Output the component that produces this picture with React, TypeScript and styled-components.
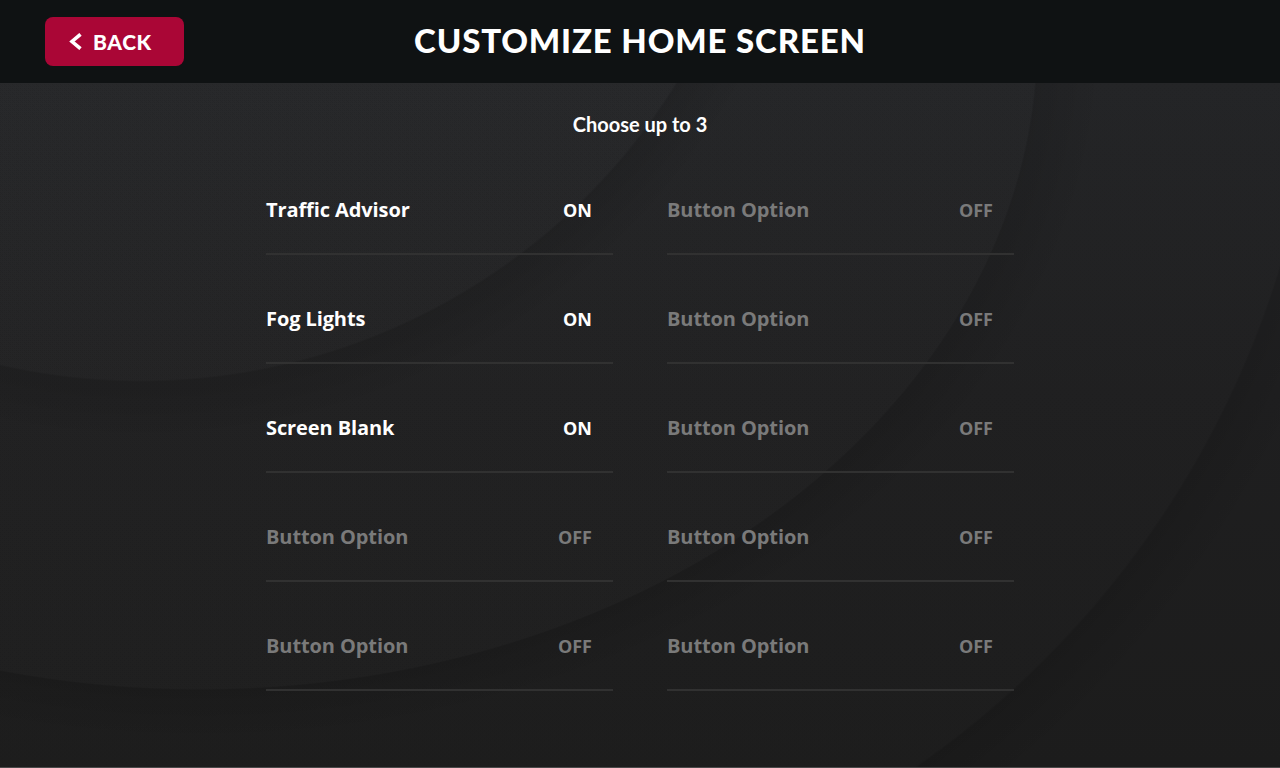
import React from "react";
import styled, { createGlobalStyle } from "styled-components";

const GlobalStyle = createGlobalStyle`
  html, body {
    margin: 0;
    padding: 0;
    background: #1c1c1c;
  }
  * { box-sizing: border-box; }
`;

const Screen = styled.div`
  width: 1280px;
  height: 768px;
  display: flex;
  flex-direction: column;
  overflow: hidden;
  font-family: Lato, "Open Sans", sans-serif;
`;

const Header = styled.header`
  height: 83px;
  flex: none;
  background: #0f1213;
  display: grid;
  grid-template-columns: 1fr auto 1fr;
  align-items: center;
`;

const BackButton = styled.button`
  justify-self: start;
  margin-left: 45px;
  margin-bottom: 1px;
  width: 139px;
  height: 49px;
  border: none;
  border-radius: 8px;
  background: #aa0636;
  color: #fff;
  display: flex;
  align-items: center;
  gap: 11px;
  padding: 0 0 0 24px;
  font-family: Lato, sans-serif;
  font-weight: 900;
  font-size: 21px;
  letter-spacing: 0.6px;
  cursor: pointer;
`;

const Title = styled.h1`
  margin: 0 0 3px;
  color: #fff;
  font-family: Lato, sans-serif;
  font-weight: 900;
  font-size: 33px;
  letter-spacing: 0.85px;
  line-height: 1;
`;

const Main = styled.main`
  flex: 1;
  display: flex;
  flex-direction: column;
  align-items: center;
  padding-top: 29px;
  border-bottom: 1px solid #4a4a4a;
  background:
    radial-gradient(circle at 141px -332px, rgba(255,255,255,0.006) 0, rgba(255,255,255,0.006) 629px, rgba(0,0,0,0.1) 631px, rgba(0,0,0,0) 690px),
    radial-gradient(838px 650px at 200px -43px, rgba(255,255,255,0.006) 0, rgba(255,255,255,0.006) 99.8%, rgba(0,0,0,0.1) 100%, rgba(0,0,0,0) 108%),
    radial-gradient(circle at 377px -91px, rgba(255,255,255,0.005) 0, rgba(255,255,255,0.005) 943px, rgba(0,0,0,0.1) 945px, rgba(0,0,0,0) 1010px),
    linear-gradient(180deg, #232426 0%, #1f1f20 45%, #1c1c1c 100%);
`;

const Hint = styled.div`
  color: #fff;
  font-family: Lato, sans-serif;
  font-weight: 700;
  font-size: 20px;
  line-height: 24px;
  height: 24px;
`;

const OptionGrid = styled.div`
  margin-top: 10px;
  display: grid;
  grid-template-columns: 347px 347px;
  column-gap: 54px;
`;

const Row = styled.div<{ $on: boolean }>`
  height: 109px;
  padding: 20px 21px 0 0;
  border-bottom: 2px solid #313131;
  display: flex;
  align-items: center;
  justify-content: space-between;
  font-family: "Open Sans", sans-serif;
  font-weight: 700;
  color: ${(p) => (p.$on ? "#ffffff" : "#7a7a7a")};
`;

const Label = styled.span`
  font-size: 20px;
  letter-spacing: -0.1px;
`;

const State = styled.span`
  font-size: 18px;
`;

type Option = { label: string; on: boolean };

const left: Option[] = [
  { label: "Traffic Advisor", on: true },
  { label: "Fog Lights", on: true },
  { label: "Screen Blank", on: true },
  { label: "Button Option", on: false },
  { label: "Button Option", on: false },
];
const right: Option[] = Array.from({ length: 5 }, () => ({ label: "Button Option", on: false }));

const cells: Option[] = [];
for (let i = 0; i < 5; i++) {
  cells.push(left[i], right[i]);
}

const Chevron = () => (
  <svg width="13" height="17" viewBox="0 0 13 17" fill="none">
    <path d="M11.5 1.3 L3 8.5 L11.5 15.7" stroke="#fff" strokeWidth="3.6" strokeLinecap="butt" strokeLinejoin="miter" />
  </svg>
);

export default function App() {
  return (
    <>
      <GlobalStyle />
      <Screen>
        <Header>
          <BackButton>
            <Chevron />
            BACK
          </BackButton>
          <Title>CUSTOMIZE HOME SCREEN</Title>
          <div />
        </Header>
        <Main>
          <Hint>Choose up to 3</Hint>
          <OptionGrid>
            {cells.map((c, i) => (
              <Row key={i} $on={c.on}>
                <Label>{c.label}</Label>
                <State>{c.on ? "ON" : "OFF"}</State>
              </Row>
            ))}
          </OptionGrid>
        </Main>
      </Screen>
    </>
  );
}
